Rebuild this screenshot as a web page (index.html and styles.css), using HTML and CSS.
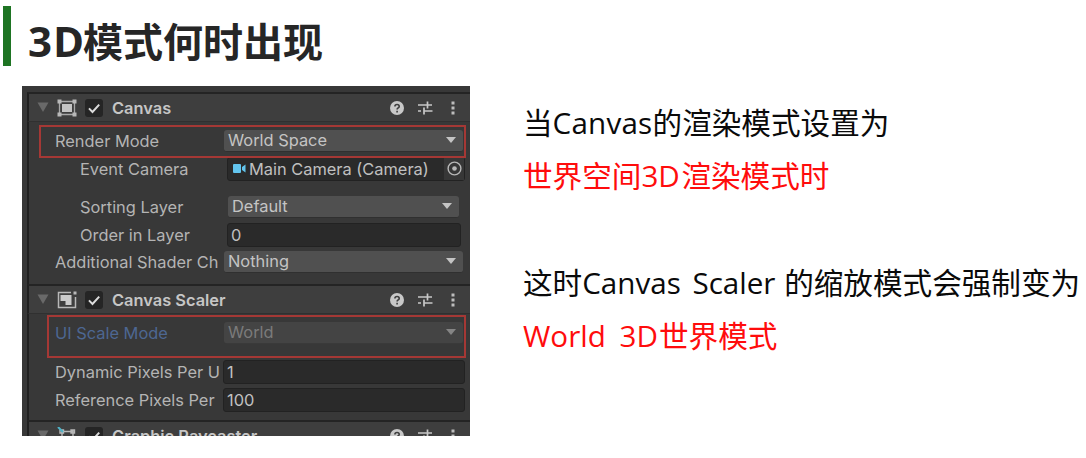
FILE: index.html
```html
<!DOCTYPE html>
<html lang="zh-CN">
<head>
<meta charset="utf-8">
<title>3D模式何时出现</title>
<link rel="stylesheet" href="styles.css">
</head>
<body>
<svg class="defs" width="0" height="0">
  <symbol id="fold" viewBox="0 0 12 11"><path d="M0.5 0.5h11L6 10z"/></symbol>
  <symbol id="check" viewBox="0 0 18 18"><path d="M4 9.4l3.5 3.6 6.7-7.4" fill="none" stroke="#dcdcdc" stroke-width="2"/></symbol>
  <symbol id="help" viewBox="0 0 14 14"><circle cx="7" cy="7" r="7" fill="#c8c8c8"/><path d="M4.9 5.4c0-2.6 4.3-2.6 4.3 0 0 1.6-2.1 1.5-2.1 3.2M7.1 9.8v1.7" fill="none" stroke="#3e3e3e" stroke-width="1.6"/></symbol>
  <symbol id="preset" viewBox="0 0 15 14"><path d="M0 4h10M10 4h4M9.500 0.500v7M0 10h3M6 10h8.500M6 6.500v7" fill="none" stroke="#c8c8c8" stroke-width="1.7"/></symbol>
  <symbol id="more" viewBox="0 0 4 14"><path d="M0.500 0.500h3v3h-3zM0.500 5.500h3v3h-3zM0.500 10.500h3v3h-3z" fill="#bcbcbc"/></symbol>
  <symbol id="arrow" viewBox="0 0 10 6"><path d="M0 0h10L5 6z"/></symbol>
</svg>
<header class="title"><span class="bar"></span><h1><span class="title-latin">3D</span>模式何时出现</h1></header>
<main class="content">
  <section class="inspector">
    <div class="head">
      <svg class="fold"><use href="#fold"/></svg>
      <svg class="kind" viewBox="0 0 20 18"><path d="M2.500 2.500h15v13h-15z" fill="none" stroke="#a8a8a8" stroke-width="1.300"/><path d="M5 5h10v8H5z" fill="#c4c4c4"/><path d="M0.500 0.500h4v4h-4zM15.500 0.500h4v4h-4zM0.500 13.500h4v4h-4zM15.500 13.500h4v4h-4z" fill="#b8b8b8"/></svg>
      <svg class="check"><use href="#check"/></svg>
      <b class="name">Canvas</b>
      <svg class="help"><use href="#help"/></svg><svg class="preset"><use href="#preset"/></svg><svg class="more"><use href="#more"/></svg>
    </div>
    <div class="fields first">
      <div class="row"><span class="label">Render Mode</span><div class="drop">World Space<svg class="arrow"><use href="#arrow"/></svg></div></div>
      <div class="row indent r2"><span class="label">Event Camera</span><div class="input object"><svg class="cam" viewBox="0 0 13 9"><rect width="8" height="9" rx="1" fill="#63c5ee"/><path d="M9 3l3.500-2.500v8L9 6z" fill="#63c5ee"/></svg><span class="camera-name">Main Camera (Camera)</span><span class="picker"><svg class="target" viewBox="0 0 15 15"><circle cx="7.500" cy="7.500" r="6.400" fill="none" stroke="#b8b8b8" stroke-width="1.400"/><circle cx="7.500" cy="7.500" r="2.300" fill="#b8b8b8"/></svg></span></div></div>
      <div class="row indent r3"><span class="label">Sorting Layer</span><div class="drop">Default<svg class="arrow"><use href="#arrow"/></svg></div></div>
      <div class="row indent r4"><span class="label">Order in Layer</span><div class="input">0</div></div>
      <div class="row r5"><span class="label">Additional Shader Ch</span><div class="drop">Nothing<svg class="arrow"><use href="#arrow"/></svg></div></div>
      <span class="mark"></span>
    </div>
    <div class="head">
      <svg class="fold"><use href="#fold"/></svg>
      <svg class="kind" viewBox="0 0 20 18"><path d="M14 1.500H1.500v15h17V6" fill="none" stroke="#b8b8b8" stroke-width="1.500"/><path d="M3.500 4h11v10H8.500v-4h-5z" fill="#cacaca"/><path d="M16.500 0.500h3v3h-3z" fill="#b8b8b8"/></svg>
      <svg class="check"><use href="#check"/></svg>
      <b class="name">Canvas Scaler</b>
      <svg class="help"><use href="#help"/></svg><svg class="preset"><use href="#preset"/></svg><svg class="more"><use href="#more"/></svg>
    </div>
    <div class="fields second">
      <div class="row r6"><span class="label">UI Scale Mode</span><div class="drop">World<svg class="arrow"><use href="#arrow"/></svg></div></div>
      <div class="row r7"><span class="label">Dynamic Pixels Per U</span><div class="input">1</div></div>
      <div class="row r8"><span class="label">Reference Pixels Per</span><div class="input">100</div></div>
      <span class="mark"></span>
    </div>
    <div class="head">
      <svg class="fold"><use href="#fold"/></svg>
      <svg class="kind" viewBox="0 0 20 18"><path d="M5 4.500h11v10H5zM3 3h3.500v3H3zM14 3h3.500v3H14z" fill="none" stroke="#b8b8b8" stroke-width="1.400"/><path d="M1 0l5 5" stroke="#4fb3c8" stroke-width="2"/></svg>
      <svg class="check"><use href="#check"/></svg>
      <b class="name">Graphic Raycaster</b>
      <svg class="help"><use href="#help"/></svg><svg class="preset"><use href="#preset"/></svg><svg class="more"><use href="#more"/></svg>
    </div>
  </section>
  <section class="notes">
    <p>当<span class="latin l1">Canvas</span>的渲染模式设置为</p>
    <p class="red">世界空间<span class="latin l2">3D</span>渲染模式时</p>
    <p class="gap">这时<span class="latin l3">Canvas Scaler </span>的缩放模式会强制变为</p>
    <p class="red"><span class="latin l4">World 3D</span>世界模式</p>
  </section>
</main>
</body>
</html>
```
FILE: styles.css
```css
* { box-sizing: border-box; }
body { margin: 0; width: 1086px; height: 458px; overflow: hidden; background: #fff; font-family: "Noto Sans", "Noto Sans CJK SC", sans-serif; }
.defs { position: absolute; }
svg { flex: none; display: block; }

.title { display: flex; height: 86px; padding: 6px 0 0 3px; }
.bar { width: 8px; height: 60px; background: #1e7423; }
h1 { margin: 4px 0 0 17px; font: bold 40px/60px "Noto Sans CJK SC", sans-serif; color: #262626; white-space: nowrap; }
.title-latin { font-family: "Open Sans", sans-serif; font-size: 42px; line-height: 50px; letter-spacing: 1px; display: inline-block; width: 55px; }

.content { display: flex; }
.inspector { width: 448px; height: 350px; padding: 6px 0 0 5px; overflow: hidden; margin-left: 22px; background: #383838; color: #b4b4b4; font: 16.400px/22px Inter, sans-serif; }
.head { display: flex; align-items: center; height: 30px; padding-left: 8px; background: #3e3e3e; border-top: 2px solid #242424; border-bottom: 1px solid #303030; border-left: 2px solid #202020; }
.fold { width: 12px; height: 11px; fill: #696969; }
.kind { width: 20px; height: 18px; margin-left: 8px; }
.check { width: 18px; height: 18px; margin-left: 8px; background: #252525; border-radius: 3px; }
.name { flex: 1; margin-left: 9px; font-weight: 600; color: #c6c6c6; white-space: nowrap; }
.help { width: 14px; height: 14px; margin-right: 14px; }
.preset { width: 15px; height: 14px; margin-right: 18px; }
.more { width: 4px; height: 14px; margin-right: 15px; }

.fields { position: relative; border-left: 2px solid #202020; padding-left: 26px; }
.first { height: 162px; padding-top: 7px; }
.second { height: 106px; padding-top: 7px; }
.row { display: flex; height: 23px; align-items: center; }
.label { width: 169px; flex: none; overflow: hidden; white-space: nowrap; line-height: 24px; }
.indent { padding-left: 25px; }
.indent .label { width: 148px; }
.drop, .input { display: flex; align-items: center; height: 22px; border-radius: 3px; white-space: nowrap; }
.drop { width: 239px; padding: 0 7px 0 4px; justify-content: space-between; background: #505050; border-bottom: 1px solid #303030; color: #c4c4c4; }
.indent .drop { width: 231px; }
.arrow { width: 10px; height: 6px; fill: #c4c4c4; }
.input { width: 242px; height: 24px; padding-left: 3px; margin-left: -1px; background: #2a2a2a; border: 1px solid #222; color: #c0c0c0; }
.indent .input { width: 234px; }
.r2 { margin-top: 5px; }
.indent .object { width: 238px; padding-left: 5px; }
.cam { width: 13px; height: 9px; margin-right: 3px; }
.camera-name { flex: 1; }
.picker { width: 20px; height: 22px; display: flex; align-items: center; justify-content: center; background: #373737; }
.target { width: 15px; height: 15px; }
.r3 { margin-top: 15px; }
.r4 { margin-top: 5px; }
.r5 { margin-top: 4px; }
.r6 .label { color: #4d6792; }
.r6 .drop { background: #444; color: #7b7b7b; border-bottom-color: #3a3a3a; }
.r6 .arrow { fill: #858585; }
.r7 { margin-top: 16px; }
.r8 { margin-top: 5px; }
.mark { position: absolute; left: 10px; right: 4px; top: 3px; height: 33px; border: 2px solid #a53835; }
.second .mark { left: 18px; top: 1px; height: 43px; }

.notes { margin: 9px 0 0 53px; font: 29.600px/54px "Noto Sans CJK SC", sans-serif; color: #0a0a0a; white-space: nowrap; }
.notes p { margin: 0; height: 53px; }
.notes .gap { margin-top: 54px; }
.notes .red { color: #ff0c0c; }
.latin { font-family: "Open Sans", sans-serif; display: inline-block; white-space: pre; }
.l1 { width: 100px; letter-spacing: 0.2px; }
.l2 { width: 40px; }
.l3 { width: 202px; word-spacing: 4px; }
.l4 { width: 136px; word-spacing: 6px; }
```
